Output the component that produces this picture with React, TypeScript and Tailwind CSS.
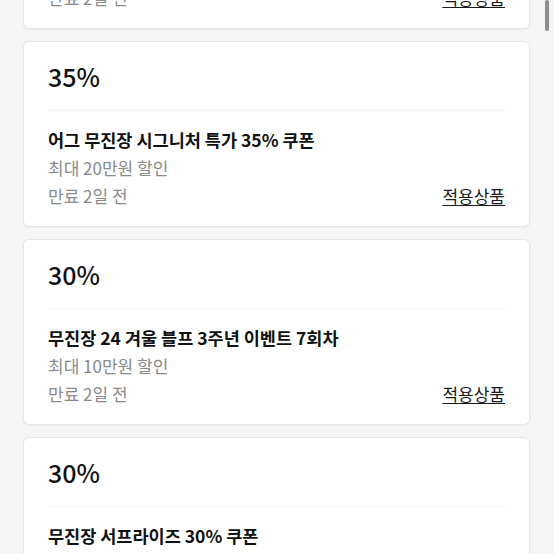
const coupons = [
  { rate: '30%', title: '무진장 블랙프라이데이 30% 쿠폰', max: '최대 10만원 할인', expire: '만료 2일 전' },
  { rate: '35%', title: '어그 무진장 시그니처 특가 35% 쿠폰', max: '최대 20만원 할인', expire: '만료 2일 전' },
  { rate: '30%', title: '무진장 24 겨울 블프 3주년 이벤트 7회차', max: '최대 10만원 할인', expire: '만료 2일 전' },
  { rate: '30%', title: '무진장 서프라이즈 30% 쿠폰', max: '최대 10만원 할인', expire: '만료 2일 전' },
];

function CouponCard({ rate, title, max, expire }: { rate: string; title: string; max: string; expire: string }) {
  return (
    <div className="bg-white border border-[#e6e6e6] rounded-md shadow-[0_1px_2px_rgba(0,0,0,0.04)] px-6 pt-[18px] pb-4">
      <div className="text-[25px] leading-8 font-medium text-[#111]">{rate}</div>
      <div className="h-px bg-[#f1f1f1] mt-[18px] mb-[15px]" />
      <div className="text-[17.5px] leading-7 font-semibold text-[#111]">{title}</div>
      <div className="text-[17px] leading-7 text-[#8a8a8a]">{max}</div>
      <div className="flex items-center justify-between">
        <span className="text-[17px] leading-7 text-[#8a8a8a]">{expire}</span>
        <a className="text-[17px] leading-7 text-[#1a1a1a] underline underline-offset-2">적용상품</a>
      </div>
    </div>
  );
}

export default function App() {
  return (
    <div
      className="relative w-[554px] h-[554px] overflow-hidden bg-[#f5f5f5]"
      style={{ fontFamily: '"Noto Sans CJK KR", "Noto Sans", sans-serif' }}
    >
      <div className="flex flex-col gap-3 pl-[23px] pr-6 -mt-[157px]">
        {coupons.map((c, i) => (
          <CouponCard key={i} {...c} />
        ))}
      </div>
      <div className="absolute right-[5px] top-0 w-1 h-[31px] rounded-full bg-[#8e8e8e]" />
    </div>
  );
}
